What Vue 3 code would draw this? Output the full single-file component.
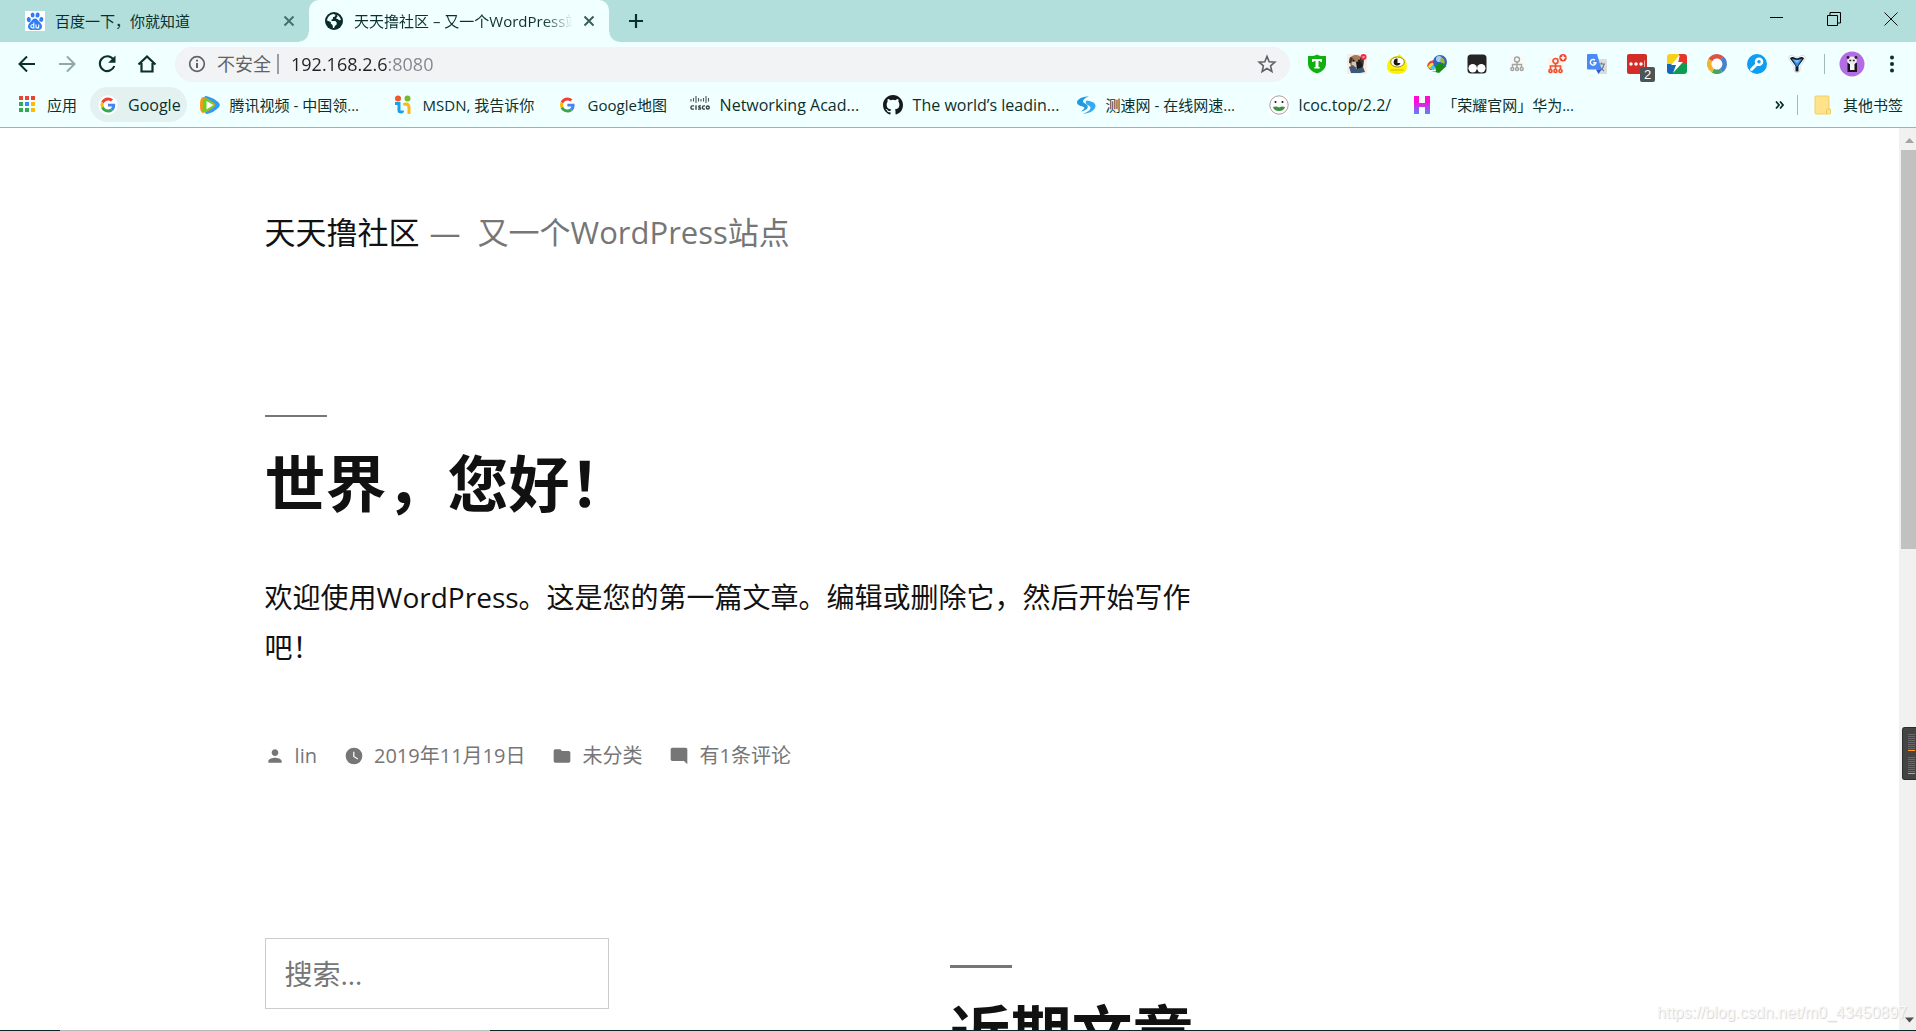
<script setup>
import { ref } from 'vue'

const address = ref('192.168.2.6:8080')
const query = ref('')
const meterBars = [1, 2, 3, 4, 5, 6, 7, 8]
</script>

<template>
  <div class="window">
    <header class="tabstrip">
      <div class="tab">
        <svg class="favicon" viewBox="0 0 20 20" aria-hidden="true">
          <rect width="20" height="20" fill="#fff" />
          <g fill="#2f7cf6">
            <ellipse cx="3.8" cy="8.6" rx="2" ry="2.6" transform="rotate(-10 3.800 8.600)" />
            <ellipse cx="7.6" cy="4" rx="2" ry="2.6" />
            <ellipse cx="12.6" cy="4" rx="2" ry="2.6" transform="rotate(12 12.600 4)" />
            <ellipse cx="16.3" cy="8.4" rx="2" ry="2.5" transform="rotate(14 16.300 8.400)" />
            <path d="M10 7.600c2 0 2.900 1.600 4 3 1.300 1.500 3 2.600 3 5 0 2.300-1.600 3.500-3.600 3.500-1.200 0-2.200-.300-3.400-.300s-2.200.300-3.400.300C4.600 19.100 3 17.900 3 15.600c0-2.400 1.700-3.500 3-5 1.100-1.400 2-3 4-3z" />
          </g>
          <path d="M8.800 11.500v5.400H7.400a1.500 1.500 0 0 1 0-3.200h1.400M11 13.400v2.500q0 1 1 1h1.700v-3.500" fill="none" stroke="#fff" stroke-width="1.100" />
        </svg>
        <span class="tab-title">百度一下，你就知道</span>
        <button class="icon-btn" aria-label="关闭">
          <svg width="12" height="12" viewBox="0 0 12 12"><path d="M1.500 1.500l9 9M10.500 1.500l-9 9" stroke="#44706c" stroke-width="2" /></svg>
        </button>
      </div>
      <div class="tab active">
        <svg class="favicon" viewBox="0 0 20 20" aria-hidden="true">
          <circle cx="10" cy="10" r="9" fill="#0b2b2b" />
          <path d="M3 9.500C3.500 6 6 3.300 9.300 3l2.200.800-.500 1.800-2 .700v1.800l-1.700.700.300 1.200h3.700l1.500 1.700-.300 2-1.500 1-1 2.300h-1l-.500-3-1.700-1.500V11z" fill="#effffe" />
          <path d="M12.800 3.700c2.200 1 3.800 3 4.100 5.300l-1.800.300-1.300-1.300-1.500-.300.300-1.500 1-.700z" fill="#effffe" />
        </svg>
        <span class="tab-title faded">天天撸社区 – 又一个WordPress站点</span>
        <button class="icon-btn" aria-label="关闭">
          <svg width="12" height="12" viewBox="0 0 12 12"><path d="M1.500 1.500l9 9M10.500 1.500l-9 9" stroke="#3a5e5b" stroke-width="2" /></svg>
        </button>
      </div>
      <button class="icon-btn new-tab" aria-label="新标签页">
        <svg width="16" height="16" viewBox="0 0 16 16"><path d="M8 1v14M1 8h14" stroke="#0b2f2c" stroke-width="2.200" /></svg>
      </button>
      <div class="window-buttons">
        <button class="icon-btn" aria-label="最小化"><svg width="14" height="14" viewBox="0 0 14 14"><path d="M0 5.500h13" stroke="#000" /></svg></button>
        <button class="icon-btn" aria-label="还原"><svg width="14" height="14" viewBox="0 0 14 14"><path d="M.5 3.500h10v10H.5zM3 3V.5h10.500V11H11" fill="none" stroke="#000" /></svg></button>
        <button class="icon-btn" aria-label="关闭窗口"><svg width="14" height="14" viewBox="0 0 14 14"><path d="M.5.500l13 13M13.500.500l-13 13" stroke="#111" /></svg></button>
      </div>
    </header>

    <div class="toolbar">
      <nav class="nav-buttons">
        <button class="icon-btn" aria-label="后退"><svg width="20" height="20" viewBox="0 0 20 20"><path d="M18 10H3M10 2.500L2.500 10l7.500 7.500" fill="none" stroke="#0b2f2c" stroke-width="2" /></svg></button>
        <button class="icon-btn" aria-label="前进"><svg width="20" height="20" viewBox="0 0 20 20"><path d="M2 10h15M10 2.500l7.500 7.500-7.500 7.500" fill="none" stroke="#8fa9a7" stroke-width="2" /></svg></button>
        <button class="icon-btn" aria-label="重新加载"><svg width="20" height="20" viewBox="0 0 20 20"><path d="M16.200 5.200A7.400 7.400 0 1 0 17.300 12" fill="none" stroke="#0b2f2c" stroke-width="2.100" /><path d="M18.500 1.500v7.300h-7.300z" fill="#0b2f2c" /></svg></button>
        <button class="icon-btn" aria-label="主页"><svg width="20" height="20" viewBox="0 0 20 20"><path d="M1.500 10.500L10 2.500l8.500 8M4.500 9v8.500h11V9" fill="none" stroke="#0b2f2c" stroke-width="2.200" /></svg></button>
      </nav>
      <div class="omnibox">
        <svg width="18" height="18" viewBox="0 0 18 18" aria-hidden="true"><circle cx="9" cy="9" r="7.300" fill="none" stroke="#5f6368" stroke-width="1.700" /><path d="M9 8v5M9 4.700v1.900" stroke="#5f6368" stroke-width="2" /></svg>
        <label class="security" for="address">不安全</label>
        <span class="omni-divider"></span>
        <input id="address" v-model="address" class="address" type="text" spellcheck="false" />
        <button class="icon-btn" aria-label="收藏"><svg width="20" height="20" viewBox="0 0 20 20"><path d="M10 2.400l2.200 5.300 5.700.500-4.300 3.700 1.300 5.600-4.900-3-4.900 3 1.300-5.600L2.100 8.200l5.700-.500z" fill="none" stroke="#5f6368" stroke-width="1.600" /></svg></button>
      </div>
      <div class="extensions">
        <button class="icon-btn" aria-label="广告拦截"><svg viewBox="0 0 20 20"><path d="M10 .500c2.500 1.500 5.500 1.800 9 1.400v7.600c0 5-4 8.500-9 10-5-1.500-9-5-9-10V1.900C4.500 2.300 7.500 2 10 .500z" fill="#0fb00f" /><path d="M5 5h10v3h-1.500l-.500-1h-1.500v6h1.200v1.500H7.300V13h1.200V7H7l-.500 1H5z" fill="#fff" /></svg></button>
        <button class="icon-btn" aria-label="小狗助手"><svg viewBox="0 0 20 20"><rect width="20" height="20" fill="#f6eee5" /><path d="M2 8C2 3 5 1 9 1s7 3 8 8l-1 5H5z" fill="#a87c5b" /><path d="M3 3l3 1-2 5H2zM13 3l4 3-1 5-3-3z" fill="#3c3634" /><path d="M5 8h5v5H5z" fill="#dcc3a8" /><circle cx="6.500" cy="6.500" r="1" fill="#111" /><circle cx="12" cy="6.500" r="1" fill="#111" /><path d="M9 8l4-1 3 4-1 4h-5z" fill="#17191f" /><path d="M2 13l4-2 4 4 6-2 2 5-5 1H4z" fill="#3f5878" /><circle cx="16.500" cy="3" r="3" fill="#f22c48" /><path d="M15.500 3h2" stroke="#fff" /></svg></button>
        <button class="icon-btn" aria-label="独眼"><svg viewBox="0 0 20 20"><path d="M12 0l3 2.500C19 5 20 9 19.800 13c0 5-4 7-9.800 7S0 18 0 12.500C0 7 4 2 11 2z" fill="#fff200" /><path d="M3.500 16h13" stroke="#c9b800" /><ellipse cx="10.500" cy="8" rx="6.800" ry="5" fill="#fff" stroke="#76702b" stroke-width=".8" /><path d="M10.500 4.500a3.500 3.500 0 1 0 3 4.500h-3z" fill="#24130c" /></svg></button>
        <button class="icon-btn" aria-label="下载管理"><svg viewBox="0 0 20 20"><path d="M0 12c1-5 6-7 10-5l-3 9H3z" fill="#f1423c" /><path d="M1 13c1-4 5-5 8-4l-3 7z" fill="#ffe33c" /><path d="M3 14c1-3 4-4 6-3l-2 5z" fill="#3ec5f2" /><circle cx="13" cy="8" r="7" fill="#2c66bd" /><circle cx="12" cy="5" r="3" fill="#a9cff4" /><path d="M14 3l3 2 1 4-3 1-2-3z" fill="#a5b343" /><path d="M8 12h3V9h5v3h3.500L12 19l-8-2 5 .500z" fill="#178a13" /></svg></button>
        <button class="icon-btn" aria-label="用户脚本"><svg viewBox="0 0 20 20"><rect x=".5" y=".5" width="19" height="19" rx="3.500" fill="#242424" /><circle cx="5.700" cy="14.200" r="4.200" fill="#fff" /><circle cx="14.300" cy="14.200" r="4.200" fill="#fff" /></svg></button>
        <button class="icon-btn" aria-label="代理"><svg viewBox="0 0 20 20"><rect x="2" y="2" width="16" height="16" fill="#f8fafa" /><g fill="none" stroke="#a3a3a3" stroke-width="1.400"><circle cx="10" cy="5.500" r="2.500" /><path d="M10 8v6M5.500 14v-3.500h9V14" /><circle cx="5.300" cy="15" r="1.500" /><circle cx="10" cy="15" r="1.500" /><circle cx="14.700" cy="15" r="1.500" /></g></svg></button>
        <button class="icon-btn" aria-label="代理加速"><svg viewBox="0 0 20 20"><rect x="1" y="4" width="16" height="16" fill="#fbf3ef" /><g fill="none" stroke="#f4502c" stroke-width="1.700"><circle cx="8.500" cy="7" r="2.500" /><path d="M8.500 9v7M3.500 16v-4h10v4" /><circle cx="3.500" cy="17" r="1.500" /><circle cx="8.500" cy="17" r="1.500" /><circle cx="13.500" cy="17" r="1.500" /></g><circle cx="16" cy="3.700" r="3.700" fill="#f4432c" /><path d="M16 1.500V6M13.800 3.700h4.400" stroke="#fff" stroke-width="1.500" /></svg></button>
        <button class="icon-btn" aria-label="翻译"><svg viewBox="0 0 20 20"><path d="M8 5h11q1 0 1 1v13q0 1-1 1h-7z" fill="#dadcdf" /><path d="M11 10h7M14.500 8.500V10M12 17c3-1 4.500-4 5-7M12 11c1 2.500 3 4.500 5 6" fill="none" stroke="#5c7d89" stroke-width="1.200" /><path d="M1 0h9l4.500 15.500H1q-1 0-1-1V1q0-1 1-1z" fill="#4a8af4" /><path d="M9 15.500h5.500L11.500 20z" fill="#2f55c8" /><path d="M8 6.200A2.800 2.800 0 1 0 8.900 8.700H6.200" fill="none" stroke="#fff" stroke-width="1.400" /></svg></button>
        <button class="icon-btn badge-host" aria-label="密码管理">
          <svg viewBox="0 0 20 20"><rect width="20" height="20" rx="2" fill="#d32d27" /><circle cx="4" cy="10" r="1.700" fill="#fff" /><circle cx="9" cy="10" r="1.700" fill="#fff" /><circle cx="14" cy="10" r="1.700" fill="#fff" /><path d="M17.500 6.500v7" stroke="#fff" stroke-opacity=".6" /></svg>
          <span class="badge">2</span>
        </button>
        <button class="icon-btn" aria-label="闪电"><svg viewBox="0 0 20 20"><clipPath id="tile"><rect width="20" height="20" rx="3" /></clipPath><g clip-path="url(#tile)"><path d="M0 0h12L7 11H0z" fill="#f7d117" /><path d="M12 0h8v10h-9z" fill="#e53628" /><path d="M0 10h10l-3 10H0z" fill="#1468b5" /><path d="M10 10h10v10H6z" fill="#0e9c50" /></g><path d="M13 1L4 11h5L6 19l10-11h-5z" fill="#fff" /></svg></button>
        <button class="icon-btn" aria-label="彩环"><svg viewBox="0 0 20 20"><circle cx="10" cy="10" r="5.500" fill="#fff" /><g fill="none" stroke-width="4.500"><path d="M3.300 6A7.700 7.700 0 0 1 15 4.200" stroke="#de5145" /><path d="M15 4.200A7.700 7.700 0 0 1 14 16.600" stroke="#4a7fd0" /><path d="M14 16.600A7.700 7.700 0 0 1 6 16.600" stroke="#43a466" /><path d="M6 16.600A7.700 7.700 0 0 1 3.300 6" stroke="#f2b42a" /></g></svg></button>
        <button class="icon-btn" aria-label="钥匙"><svg viewBox="0 0 20 20"><circle cx="10" cy="10" r="10" fill="#0d9df2" /><circle cx="12" cy="7.800" r="3" fill="none" stroke="#fff" stroke-width="2.500" /><path d="M9.500 10.500l-5 5" stroke="#fff" stroke-width="3" stroke-linecap="round" /></svg></button>
        <button class="icon-btn" aria-label="过滤"><svg viewBox="0 0 20 20"><path d="M2 5q-1-4 3-3.500l5 2 5-2q4-.500 3 3.500l-5 7.500V17q-3 3.500-6 0v-4.500z" fill="#fff" stroke="#d3dede" /><path d="M3 4.500Q3.500 2.500 6 3l4 1.500L14 3q2.500-.500 3 1.500L11.500 12v5.500h-3V12z" fill="#111a2c" /><path d="M4.800 4.800Q10 7 15.200 4.800L10 13z" fill="#2f8ee8" /><path d="M6.500 5.500Q10 7 13.500 5.500L10 9z" fill="#8cc6f8" /></svg></button>
      </div>
      <span class="bar-divider"></span>
      <button class="icon-btn avatar" aria-label="用户"><svg width="26" height="26" viewBox="0 0 26 26"><circle cx="13" cy="13" r="12.500" fill="#b46ce4" /><path d="M8.500 12h9.500v9H8.500z" fill="#15151b" /><path d="M11 13h4.500v6H11z" fill="#f5f5f5" /><ellipse cx="13" cy="9.500" rx="4.800" ry="4" fill="#eee" /><circle cx="9" cy="6.500" r="1.400" fill="#222" /><circle cx="17" cy="6.500" r="1.400" fill="#222" /><path d="M10.300 9.500h1.900M13.800 9.500h1.900" stroke="#222" stroke-width="1.300" /></svg></button>
      <button class="icon-btn kebab" aria-label="菜单"><svg width="4" height="18" viewBox="0 0 4 18"><g fill="#0b2f2c"><circle cx="2" cy="2.500" r="2" /><circle cx="2" cy="9" r="2" /><circle cx="2" cy="15.500" r="2" /></g></svg></button>
    </div>

    <nav class="bookmarks">
      <a class="bookmark" href="#">
        <svg viewBox="0 0 20 20"><g fill="#ea4335"><path d="M2 1h4v4H2zM8 1h4v4H8zM14 1h4v4h-4z" /></g><path d="M2 7h4v4H2zM2 13h4v4H2zM8 13h4v4H8z" fill="#34a853" /><path d="M8 7h4v4H8z" fill="#4285f4" /><path d="M14 7h4v4h-4zM14 13h4v4h-4z" fill="#fbbc05" /></svg>
        <span>应用</span>
      </a>
      <a class="bookmark hovered latin" href="#">
        <svg viewBox="-8 -8 64 64"><circle cx="24" cy="24" r="31" fill="#fff" /><path fill="#EA4335" d="M24 9.500c3.540 0 6.710 1.220 9.210 3.600l6.850-6.850C35.900 2.380 30.470 0 24 0 14.620 0 6.510 5.380 2.560 13.220l7.980 6.190C12.430 13.720 17.740 9.500 24 9.500z" /><path fill="#4285F4" d="M46.980 24.550c0-1.570-.150-3.090-.380-4.550H24v9.020h12.940c-.580 2.960-2.260 5.480-4.780 7.180l7.730 6c4.510-4.180 7.090-10.360 7.090-17.650z" /><path fill="#FBBC05" d="M10.530 28.590a14.500 14.500 0 0 1 0-9.180l-7.980-6.190a24 24 0 0 0 0 21.560z" /><path fill="#34A853" d="M24 48c6.480 0 11.930-2.130 15.890-5.810l-7.730-6c-2.150 1.450-4.920 2.300-8.160 2.300-6.260 0-11.570-4.220-13.470-9.910l-7.980 6.190C6.510 42.620 14.620 48 24 48z" /></svg>
        <span>Google</span>
      </a>
      <a class="bookmark long" href="#">
        <svg viewBox="0 0 20 20"><path d="M5 1c6 .500 11 4 14 7q1.500 2 0 4c-3 3.500-8 6.500-13 7-4-5-4-13-1-18z" fill="#2d9cf4" /><path d="M1.500 3Q3 1 6 3c4 2 7 4 9 6q1 1 0 2c-3 3-8 6-12 7Q0 18 0 10q0-5 1.500-7z" fill="#ff9318" /><path d="M3 3c5 1 9 4 11.500 6.500v1C11 14 6 17 2.500 17z" fill="#6bd01b" /><path d="M6.500 6l7 4-7 4.500z" fill="#fff" /></svg>
        <span>腾讯视频 - 中国领...</span>
      </a>
      <a class="bookmark medium" href="#">
        <svg viewBox="0 0 20 20"><circle cx="5" cy="3.500" r="3" fill="#f2572b" /><circle cx="14.500" cy="3.500" r="3" fill="#7cb928" /><path d="M2 8.500h4v7q0 1.500 2 1.500 1.500 0 1.500-1.500" fill="none" stroke="#1ba1e8" stroke-width="3" /><path d="M16 19v-6q0-4-3-4-1.500 0-2.500 1" fill="none" stroke="#fcb913" stroke-width="3" /></svg>
        <span>MSDN, 我告诉你</span>
      </a>
      <a class="bookmark short" href="#">
        <svg viewBox="-6 -8 64 64"><circle cx="24" cy="24" r="28" fill="#fff" /><path fill="#EA4335" d="M24 9.500c3.540 0 6.710 1.220 9.210 3.600l6.850-6.850C35.900 2.380 30.470 0 24 0 14.620 0 6.510 5.380 2.560 13.220l7.980 6.190C12.430 13.720 17.740 9.500 24 9.500z" /><path fill="#4285F4" d="M46.980 24.550c0-1.570-.150-3.090-.380-4.550H24v9.020h12.940c-.580 2.960-2.260 5.480-4.780 7.180l7.730 6c4.510-4.180 7.090-10.360 7.090-17.650z" /><path fill="#FBBC05" d="M10.530 28.590a14.500 14.500 0 0 1 0-9.180l-7.980-6.190a24 24 0 0 0 0 21.560z" /><path fill="#34A853" d="M24 48c6.480 0 11.930-2.130 15.890-5.810l-7.730-6c-2.150 1.450-4.920 2.300-8.160 2.300-6.260 0-11.570-4.220-13.470-9.910l-7.980 6.190C6.510 42.620 14.620 48 24 48z" /></svg>
        <span>Google地图</span>
      </a>
      <a class="bookmark long latin" href="#">
        <svg viewBox="0 0 20 20"><path d="M1 4v2.500M3.500 3v3.500M6 1v7M8.500 3v3.500M11 4v2.500M13.500 3v3.500M16 1v7M18.500 3v3.500" stroke="#4b5857" stroke-width="1.100" /><g fill="none" stroke="#384645" stroke-width="1.400"><path d="M4 10.900H2.500a1.600 1.600 0 0 0 0 3.200H4M6 10.200v4.600M11 10.900H9.300q-1.200.800 0 1.500 2 .700.800 1.700H8M15 10.900h-1a1.600 1.600 0 0 0 0 3.200h1" /><circle cx="17.800" cy="12.500" r="1.500" /></g></svg>
        <span>Networking Acad...</span>
      </a>
      <a class="bookmark long latin" href="#">
        <svg viewBox="0 0 16 16"><path fill="#161a1d" d="M8 0C3.580 0 0 3.580 0 8c0 3.540 2.290 6.530 5.470 7.590.400.070.550-.170.550-.380 0-.190-.010-.820-.010-1.490-2.010.370-2.530-.490-2.690-.940-.090-.230-.480-.940-.820-1.130-.280-.150-.680-.520-.010-.530.630-.010 1.080.580 1.230.820.720 1.210 1.870.870 2.330.660.070-.520.280-.870.510-1.070-1.780-.200-3.640-.890-3.640-3.950 0-.870.310-1.590.820-2.150-.080-.200-.360-1.020.080-2.120 0 0 .670-.210 2.200.820a7.420 7.420 0 0 1 4 0c1.530-1.040 2.200-.820 2.200-.820.440 1.100.160 1.920.080 2.120.510.560.820 1.270.820 2.150 0 3.070-1.870 3.750-3.650 3.950.290.250.540.730.540 1.480 0 1.070-.010 1.930-.010 2.200 0 .210.150.460.550.380A8.010 8.010 0 0 0 16 8c0-4.420-3.580-8-8-8z" /></svg>
        <span>The world’s leadin...</span>
      </a>
      <a class="bookmark long" href="#">
        <svg viewBox="0 0 20 20"><path d="M13 1C6 2 1 4 1 7.500c0 3 5 3.500 7 4.500 1.500 1-1 3-3 4.500 6-1 8.500-4.500 5.500-7C8.500 8 6.500 7.500 7 6c.500-2 3.500-4 6-5z" fill="#2298e0" /><path d="M10.500 5.500c4 .500 8.500 1.500 9 5 .300 5-5.500 7.500-12.500 8.500 4-2 8-4 7.500-6.500-.500-2-4-2.500-4.500-4-.300-1.300-.200-2.200.500-3z" fill="#35aaf0" /></svg>
        <span>测速网 - 在线网速...</span>
      </a>
      <a class="bookmark latin" href="#">
        <svg viewBox="0 0 20 20"><rect width="20" height="20" fill="#fff" /><circle cx="10" cy="10" r="9.200" fill="#fff" stroke="#888" stroke-width=".8" /><circle cx="6.500" cy="7" r="1" fill="#111" /><circle cx="13.500" cy="7" r="1" fill="#111" /><path d="M4 12q3-1 6 .500 3-1.500 6-.500-1 4-6 4t-6-4z" fill="#3d9140" /></svg>
        <span>lcoc.top/2.2/</span>
      </a>
      <a class="bookmark long" href="#">
        <svg viewBox="0 0 20 20"><defs><linearGradient id="honor" x2="0" y2="1"><stop offset=".35" stop-color="#ff0bd5" /><stop offset="1" stop-color="#4d8cff" /></linearGradient></defs><path d="M2 1h5v7h6V1h5v18h-5v-7H7v7H2z" fill="url(#honor)" /></svg>
        <span>「荣耀官网」华为...</span>
      </a>
      <button class="icon-btn more" aria-label="更多书签"><svg width="9" height="8" viewBox="0 0 9 8"><path d="M1 .500L4 4 1 7.500M5 .500L8 4 5 7.500" fill="none" stroke="#0b2f2c" stroke-width="1.800" /></svg></button>
      <span class="bar-divider"></span>
      <a class="bookmark" href="#">
        <svg viewBox="0 0 20 20"><path d="M3 1h12q1 0 1 1v12h1.500v4q0 1-1 1H3q-1 0-1-1V2q0-1 1-1z" fill="#ffe38c" stroke="#f2cf61" /><path d="M13.500 19v-3.500q0-1.500 2.500-1.500" fill="none" stroke="#eec54d" /></svg>
        <span>其他书签</span>
      </a>
    </nav>

    <div class="viewport">
      <div class="page">
        <div class="masthead">
          <a class="site-name" href="#">天天撸社区</a>
          <span class="site-desc"><span class="dash">—</span>又一个WordPress站点</span>
        </div>
        <article class="post">
          <h1 class="headline"><a href="#">世界，您好！</a></h1>
          <p class="post-text">欢迎使用WordPress。这是您的第一篇文章。编辑或删除它，然后开始写作吧！</p>
          <footer class="meta">
            <a href="#"><svg viewBox="0 0 24 24"><path d="M12 12c2.210 0 4-1.790 4-4s-1.790-4-4-4-4 1.790-4 4 1.790 4 4 4zm0 2c-2.670 0-8 1.340-8 4v2h16v-2c0-2.660-5.330-4-8-4z" /></svg>lin</a>
            <a href="#"><svg viewBox="0 0 24 24"><path fill-rule="evenodd" d="M12 2a10 10 0 1 0 0 20 10 10 0 0 0 0-20zm4.200 14.200L11 13V7h1.500v5.200l4.500 2.700z" /></svg>2019年11月19日</a>
            <a href="#"><svg viewBox="0 0 24 24"><path d="M10 4H4c-1.100 0-2 .900-2 2v12c0 1.100.900 2 2 2h16c1.100 0 2-.900 2-2V8c0-1.100-.900-2-2-2h-8z" /></svg>未分类</a>
            <a href="#"><svg viewBox="0 0 24 24"><path d="M22 4c0-1.100-.900-2-2-2H4c-1.100 0-2 .900-2 2v12c0 1.100.900 2 2 2h14l4 4z" /></svg>有1条评论</a>
          </footer>
        </article>
        <aside class="widgets">
          <form class="search" role="search" @submit.prevent>
            <input v-model="query" type="search" placeholder="搜索…" aria-label="搜索" />
          </form>
          <section class="recent">
            <h2 class="headline">近期文章</h2>
          </section>
        </aside>
      </div>
      <div class="scrollbar">
        <svg class="arrow" viewBox="0 0 17 22"><path d="M6 15l4.500-5 4.500 5z" fill="#a3a3a3" /></svg>
        <div class="track"><div class="thumb"></div></div>
        <svg class="arrow" viewBox="0 0 17 22"><path d="M6 9.500l4.500 5 4.500-5z" fill="#505050" /></svg>
      </div>
      <div class="gadget">
        <div class="meter"><i v-for="n in meterBars" :key="n"></i><i class="orange"></i></div>
        <div class="meter"><i v-for="n in meterBars" :key="n"></i><i class="green"></i></div>
      </div>
      <div class="watermark">https://blog.csdn.net/m0_43450897</div>
    </div>
    <div class="taskbar-edge"><span class="edge-lit"></span><span class="edge-soft"></span></div>
  </div>
</template>

<style>
body {
  margin: 0;
}
</style>

<style scoped>
* {
  box-sizing: border-box;
}
.window {
  display: flex;
  flex-direction: column;
  height: 100vh;
  overflow: hidden;
  font-family: "Open Sans", "Noto Sans CJK SC", sans-serif;
  font-size: 15px;
  color: #0b2f2c;
  background: #fff;
}
a {
  color: inherit;
  text-decoration: none;
}
svg {
  display: block;
  flex: none;
}
.icon-btn {
  display: flex;
  flex: none;
  align-items: center;
  justify-content: center;
  padding: 0;
  border: 0;
  background: none;
}

/* Tab strip */
.tabstrip {
  display: flex;
  flex: none;
  height: 42px;
  padding-left: 9px;
  background: #b2dfdc;
}
.tab {
  position: relative;
  display: flex;
  align-items: center;
  width: 300px;
  padding: 0 14px 0 16px;
}
.tab.active {
  padding-left: 15px;
  border-radius: 10px 10px 0 0;
  background: #f0ffff;
}
.tab.active::before,
.tab.active::after {
  content: "";
  position: absolute;
  bottom: 0;
  width: 10px;
  height: 10px;
}
.tab.active::before {
  right: 100%;
  background: radial-gradient(circle at 0 0, #b2dfdc 9px, #f0ffff 10px);
}
.tab.active::after {
  left: 100%;
  background: radial-gradient(circle at 100% 0, #b2dfdc 9px, #f0ffff 10px);
}
.favicon {
  width: 20px;
  height: 20px;
  margin-right: 10px;
}
.tab-title {
  flex: 1;
  margin-right: 10px;
  overflow: hidden;
  line-height: 24px;
  white-space: nowrap;
}
.faded {
  -webkit-mask-image: linear-gradient(to left, transparent, #000 30px);
  mask-image: linear-gradient(to left, transparent, #000 30px);
}
.new-tab {
  width: 34px;
  margin-left: 10px;
}
.window-buttons {
  display: flex;
  gap: 43px;
  height: 37px;
  margin-left: auto;
  margin-right: 18px;
}

/* Toolbar */
.toolbar {
  display: flex;
  flex: none;
  align-items: center;
  height: 44px;
  background: #f0ffff;
}
.nav-buttons {
  display: flex;
  gap: 20px;
  padding: 0 18px 0 17px;
}
.omnibox {
  display: flex;
  flex: 1;
  align-items: center;
  height: 35px;
  padding: 0 13px;
  border-radius: 18px;
  background: #f1f3f4;
  font-size: 18px;
}
.security {
  margin-left: 11px;
  color: #5f6368;
  line-height: 24px;
}
.omni-divider {
  width: 2px;
  height: 20px;
  margin: 0 12px 0 6px;
  background: #9a9da1;
}
.address {
  flex: 1;
  min-width: 0;
  height: 28px;
  padding: 0;
  border: 0;
  outline: 0;
  font: inherit;
  color: transparent;
  background: linear-gradient(to right, #202124 96px, #80868b 96px);
  -webkit-background-clip: text;
  background-clip: text;
}
.extensions {
  display: flex;
  gap: 20px;
  margin-left: 17px;
}
.extensions svg {
  width: 20px;
  height: 20px;
}
.badge-host {
  position: relative;
}
.badge {
  position: absolute;
  top: 13px;
  left: 13px;
  width: 15px;
  height: 15px;
  border-radius: 2px;
  background: #4d5456;
  color: #fff;
  font-size: 13px;
  line-height: 15px;
  text-align: center;
}
.bar-divider {
  flex: none;
  width: 1px;
  height: 20px;
  background: #9fbcba;
}
.toolbar .bar-divider {
  margin: 0 14px 0 17px;
}
.kebab {
  margin: 0 22px 0 25px;
}

/* Bookmarks */
.bookmarks {
  display: flex;
  flex: none;
  gap: 5px;
  align-items: center;
  height: 42px;
  padding: 0 5px 4px 9px;
  border-bottom: 1px solid #98b5b3;
  background: #f0ffff;
}
.bookmark {
  display: flex;
  flex: none;
  gap: 10px;
  align-items: center;
  height: 35px;
  padding: 0 8px;
  border-radius: 18px;
  line-height: 24px;
  white-space: nowrap;
}
.bookmark svg {
  width: 20px;
  height: 20px;
}
.hovered {
  padding-right: 6px;
  background: #e4f1f1;
}
.latin {
  font-size: 16px;
}
.long span {
  width: 142px;
}
.medium span {
  min-width: 114px;
}
.short span {
  min-width: 81px;
}
.more {
  margin-left: auto;
  margin-right: 8px;
}
.bookmarks .bar-divider {
  margin-right: 2px;
}

/* Page */
.viewport {
  position: relative;
  display: flex;
  flex: 1;
  min-height: 0;
  overflow: hidden;
}
.page {
  flex: 1;
  min-width: 0;
  padding: 82px calc(10% + 73px) 0;
  color: #111;
}
.masthead {
  display: flex;
  flex-wrap: wrap;
  gap: 10px;
  font-size: 31px;
  line-height: 44px;
}
.site-desc {
  color: #767676;
}
.dash {
  margin-right: 17px;
}
.post {
  margin-top: 161px;
}
.headline {
  margin: 0;
  font-size: 61px;
  font-weight: 700;
  line-height: 76px;
}
.headline::before {
  content: "";
  display: block;
  width: 62px;
  height: 2px;
  margin-bottom: 29px;
  background: #767676;
}
.post-text {
  max-width: 68%;
  margin: 50px 0 0;
  font-size: 28px;
  line-height: 50px;
}
.meta {
  display: flex;
  gap: 27px;
  margin-top: 69px;
  color: #767676;
  font-size: 20px;
  line-height: 30px;
}
.meta a {
  display: flex;
  gap: 10px;
  align-items: center;
}
.meta svg {
  width: 20px;
  height: 20px;
  fill: #767676;
}
.widgets {
  display: grid;
  grid-template-columns: 1fr 1fr;
  margin-top: 167px;
}
.search input {
  display: block;
  width: 344px;
  height: 71px;
  padding: 0 19px;
  border: 1px solid #ccc;
  border-radius: 0;
  outline: 0;
  appearance: none;
  background: #fff;
  color: #111;
  font: inherit;
  font-size: 28px;
}
.search input::placeholder {
  color: #767676;
}
.recent {
  padding-top: 27px;
}
.recent .headline::before {
  height: 3px;
  margin-bottom: 28px;
}

/* Scrollbar and overlays */
.scrollbar {
  display: flex;
  flex: none;
  flex-direction: column;
  width: 17px;
  background: #f1f1f1;
}
.arrow {
  width: 17px;
  height: 22px;
}
.track {
  flex: 1;
  padding-left: 2px;
}
.thumb {
  height: 46.5%;
  background: #c1c1c1;
}
.gadget {
  position: absolute;
  top: 599px;
  right: 0;
  width: 14px;
  padding: 6px 1px 5px 5px;
  border: 1px solid #2c2c2c;
  border-right: 0;
  border-radius: 3px 0 0 3px;
  background: #444;
}
.meter {
  display: flex;
  flex-direction: column;
  gap: 1px;
}
.meter + .meter {
  margin-top: 6px;
}
.meter i {
  height: 1px;
  background: #686868;
}
.meter .orange {
  background: #ff9d1c;
}
.meter .green {
  background: #86d32c;
}
.watermark {
  position: absolute;
  right: 9px;
  bottom: 7px;
  color: #f8f8f8;
  font-family: "Liberation Sans", sans-serif;
  font-size: 16px;
  line-height: 20px;
  text-shadow: 1px 1px 1px #d2d2d2;
}
.taskbar-edge {
  display: flex;
  flex: none;
  height: 1px;
  padding-left: 60px;
  background: #0a2626;
}
.edge-lit {
  width: 380px;
  background: #b7b7b7;
}
.edge-soft {
  width: 50px;
  background: #b5c2c1;
}
</style>
